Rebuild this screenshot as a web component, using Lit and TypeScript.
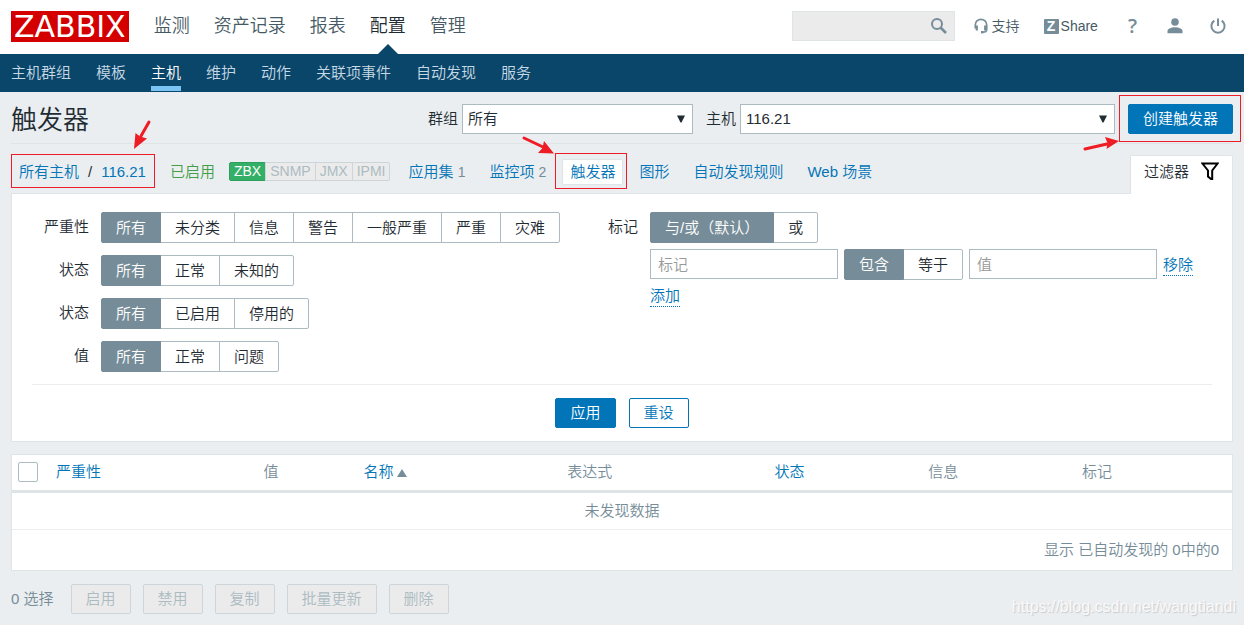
import { LitElement, html, css, svg, nothing } from "lit";
import { customElement, property } from "lit/decorators.js";
import { classMap } from "lit/directives/class-map.js";

@customElement("segmented-radio")
class SegmentedRadio extends LitElement {
  @property({ type: Array }) options: string[] = [];
  @property() name = "";
  @property() label = "";

  static styles = css`
    :host { display: inline-flex; }
    .group { display: flex; }
    .option {
      position: relative;
      box-sizing: border-box;
      height: 31px;
      padding: 0 14px;
      margin-left: -1px;
      border: 1px solid #acbbc2;
      line-height: 29px;
      color: #1f2c33;
      background: #fff;
      white-space: nowrap;
      cursor: pointer;
    }
    .option:first-child { margin-left: 0; border-radius: 2px 0 0 2px; }
    .option:last-child { border-radius: 0 2px 2px 0; }
    .option:has(.radio:checked) { background: #768d99; border-color: #768d99; color: #fff; z-index: 1; }
    .radio { position: absolute; inset: 0; margin: 0; opacity: 0; }
  `;

  render() {
    return html`<div class="group" role="radiogroup" aria-label=${this.label}>
      ${this.options.map((text, i) => html`
        <label class="option"><input class="radio" type="radio" name=${this.name} ?checked=${i === 0} />${text}</label>`)}
    </div>`;
  }
}

const icons = {
  search: html`<svg width="18" height="18" viewBox="0 0 18 18" fill="none" stroke="#768d99"><circle cx="7" cy="7" r="5" stroke-width="2"/><path d="M10.500 10.500 16 16" stroke-width="2.600"/></svg>`,
  support: html`<svg width="14" height="16" viewBox="0 0 14 16" fill="none" stroke="#768d99" stroke-width="1.700"><path d="M1.300 10.500V7a5.700 5.700 0 0 1 11.400 0v4.500c0 1.800-1.600 2.700-4 2.700"/><path d="M2.800 7.500v5M11.200 7.500v5" stroke-width="2.200"/><path d="M7 14.200h2.400" stroke-width="2.400"/></svg>`,
  user: html`<svg width="16" height="16" viewBox="0 0 16 16" fill="#768d99"><circle cx="8" cy="4" r="3.800"/><path d="M.5 15.200V13c0-2.600 4.500-3.700 7.500-3.700s7.500 1.100 7.500 3.700v2.200z"/></svg>`,
  power: html`<svg width="16" height="16" viewBox="0 0 16 16" fill="none" stroke="#768d99" stroke-width="2"><path d="M4.300 2.600a6.600 6.600 0 1 0 7.400 0M8 .5v7.600"/></svg>`,
  funnel: html`<svg width="18" height="19" viewBox="0 0 18 19" fill="none" stroke="#000" stroke-width="2"><path d="M1.400 1.500h15.200L11.200 8.500v8.500H10L7 14.500v-6z"/></svg>`,
};

@customElement("app-root")
class AppRoot extends LitElement {
  static styles = css`
    :host {
      display: block;
      position: relative;
      min-height: 100vh;
      background: #ebeef0;
      color: #1f2c33;
      font: 350 15px/20px "Liberation Sans", "Noto Sans CJK SC", sans-serif;
    }
    a { color: #0275b8; text-decoration: none; }
    button, input, select { font: inherit; box-sizing: border-box; }

    .top { display: flex; align-items: center; box-sizing: border-box; height: 54px; padding: 0 18px 2px 11px; background: #fff; }
    .logo { padding: 0 3px; background: #d40000; color: #fff; font: 30px/31px "DejaVu Sans", sans-serif; }
    .menu { display: flex; gap: 24px; height: 54px; margin-left: 25px; align-self: flex-start; }
    .menu-link { position: relative; color: #455a64; font-size: 18px; line-height: 53px; }
    .menu-link.active { color: #1f2c33; }
    .menu-link.active::after {
      content: "";
      position: absolute;
      left: 50%;
      bottom: 0;
      margin-left: -10px;
      border: 10px solid transparent;
      border-top: 0;
      border-bottom-color: #0a466a;
    }
    .search { display: flex; align-items: center; box-sizing: border-box; width: 163px; height: 30px; padding-right: 6px; margin: 0 19px 0 auto; background: #ebebeb; border: 1px solid #dfe4e7; }
    .search-input { flex: 1; min-width: 0; border: 0; background: none; outline: 0; }
    .search-button { display: flex; padding: 0; border: 0; background: none; }
    .tools { display: flex; align-items: center; gap: 24px; font-size: 14px; }
    .tool { display: flex; align-items: center; gap: 4px; color: #455a64; }
    .share { gap: 2px; }
    .share-mark { width: 15px; border-radius: 1px; background: #768d99; color: #fff; font-weight: bold; line-height: 15px; text-align: center; }
    .help { padding: 0 6px; color: #768d99; font: 600 20px/20px "Open Sans", sans-serif; }
    .exit { padding-left: 3px; }

    .subnav { display: flex; gap: 25px; height: 38px; padding: 0 11px; background: #0a466a; }
    .sub-link { height: 32px; color: #c6d9e4; line-height: 38px; }
    .sub-link.active { color: #fff; border-bottom: 5px solid #7ac3f3; }

    .page { padding: 0 11px; }
    .title-row { display: flex; align-items: center; box-sizing: border-box; height: 52px; padding-top: 2px; border-bottom: 1px solid #dfe4e7; }
    .title { margin: 0 auto 0 0; padding-top: 3px; font-size: 26px; font-weight: inherit; line-height: 32px; }
    .field { display: flex; align-items: center; gap: 4px; margin-right: 13px; }
    .select-wrap { display: flex; align-items: center; position: relative; }
    .select { appearance: none; height: 30px; padding: 0 24px 0 5px; border: 1px solid #acbbc2; border-radius: 0; background: #fff; color: #1f2c33; }
    .select-group { width: 231px; }
    .select-host { width: 375px; }
    .caret { position: absolute; right: 8px; pointer-events: none; }
    .anchor { position: relative; display: flex; align-items: center; }
    .mark { position: absolute; border: 1px solid #ee1c24; pointer-events: none; }
    .mark-create { inset: -9px -8px -8px -9px; }
    .mark-path { inset: -8px -9px -6px -8px; }
    .mark-tab { inset: -6px -4px -4px -7px; }
    .arrow { position: absolute; pointer-events: none; overflow: visible; }
    .arrow-create { right: 114px; top: 35px; }
    .arrow-path { left: 112px; top: -42px; }
    .arrow-tab { right: 69px; top: -23px; }

    .button { height: 30px; padding: 0 14px; border: 1px solid #0275b8; border-radius: 2px; background: #fff; color: #0275b8; }
    .button.primary { background: #0275b8; color: #fff; }
    .button:disabled { background: #ebebeb; border-color: #ccd5d9; color: #acbbc2; }

    .object-row { display: flex; align-items: center; height: 49px; padding-left: 8px; }
    .object-nav { display: flex; align-items: center; height: 34px; margin-top: 6px; flex: 1; }
    .path { gap: 9px; }
    .enabled { margin-left: 24px; color: #429e47; }
    .badges { display: flex; margin: 0 10px 0 14px; font-size: 14px; line-height: 17px; }
    .badge { padding: 0 4px; border: 1px solid #ccd5d9; margin-left: -1px; background: #ebebeb; color: #acbbc2; }
    .badge:first-child { margin-left: 0; border-color: #2f9f5e; border-radius: 2px 0 0 2px; background: #34af67; color: #fff; }
    .badge:last-child { border-radius: 0 2px 2px 0; }
    .tabs { display: flex; gap: 8px; }
    .tab { padding: 2px 7px; border: 1px solid transparent; border-radius: 2px; white-space: nowrap; }
    .tab.active { background: #fff; border-color: #dfe4e7; }
    .count { color: #768d99; font-size: 14px; }
    .filter-tab { display: flex; align-items: center; align-self: flex-end; gap: 12px; box-sizing: border-box; height: 39px; margin-bottom: -1px; padding: 0 13px 7px 13px; border: 1px solid #dfe4e7; border-bottom: 0; background: #fff; color: #1f2c33; z-index: 1; border-radius: 2px 2px 0 0; }

    .card { border: 1px solid #dfe4e7; background: #fff; }
    .filter { padding: 18px 20px 13px; }
    .filter-columns { display: grid; grid-template-columns: 564px 1fr; gap: 12px; padding-bottom: 12px; border-bottom: 1px solid #ebeef0; }
    .rows { display: flex; flex-direction: column; gap: 12px; }
    .row { display: grid; grid-template-columns: 57px 1fr; column-gap: 12px; line-height: 29px; }
    .row-label { text-align: right; }
    .tags { display: grid; grid-template-columns: 30px 1fr; column-gap: 12px; align-content: start; line-height: 29px; }
    .tag-stack { display: flex; flex-direction: column; align-items: flex-start; gap: 6px; }
    .tag-line { display: flex; align-items: flex-start; gap: 6px; }
    .text-input { width: 188px; height: 30px; padding: 0 7px; border: 1px solid #acbbc2; background: #fff; }
    .text-input::placeholder { color: #999; opacity: 1; }
    .dotted { padding: 0; border: 0; border-bottom: 1px dotted #0275b8; background: none; color: #0275b8; line-height: 20px; }
    .remove { margin-top: 6px; }
    .filter-actions { display: flex; justify-content: center; gap: 13px; padding-top: 13px; }

    .list { margin-top: 12px; }
    .table { width: 100%; table-layout: fixed; border-collapse: collapse; color: #768d99; }
    .table th { box-sizing: border-box; height: 36px; padding: 0 6px; border-bottom: 3px solid #dfe4e7; font-weight: inherit; text-align: left; }
    .table td { height: 36px; padding: 0 13px; border-bottom: 1px solid #ebeef0; text-align: center; }
    .table .total { height: 40px; border: 0; text-align: right; }
    .table .c-check { width: 38px; }
    .table .c-severity { width: 17%; }
    .table .c-value { width: 8.2%; }
    .table .c-name { width: 16.7%; }
    .table .c-expression { width: 17%; }
    .table .c-narrow { width: 12.6%; }
    .check { display: block; appearance: none; width: 20px; height: 20px; margin: 0; border: 1px solid #acbbc2; border-radius: 2px; background: #fff; }
    .sort { margin-left: 4px; }

    .actions { display: flex; align-items: center; gap: 12px; padding: 13px 0 11px; color: #768d99; }
    .selected { margin-right: 5px; }
    .watermark { position: absolute; right: 8px; bottom: 8px; color: #fff; font-size: 16px; line-height: 20px; text-shadow: 1px 1px 1px #b8bcc0; opacity: 0.7; }
  `;

  private arrow(cls: string, w: number, h: number, line: string, head: string) {
    return html`<svg class="arrow ${cls}" width=${w} height=${h} viewBox="0 0 ${w} ${h}" aria-hidden="true">
      ${svg`<path d=${line} stroke="#ee1c24" stroke-width="3" stroke-linecap="round"/><path d=${head} fill="#ee1c24"/>`}
    </svg>`;
  }

  private caret() {
    return html`<svg class="caret" width="8" height="8" viewBox="0 0 8 8" aria-hidden="true"><path d="M0 .5h8L4.500 7.500h-1z" fill="#1f2c33"/></svg>`;
  }

  private link(cls: string, text: string, active: boolean) {
    return html`<a href="#" class=${classMap({ [cls]: true, active })}>${text}</a>`;
  }

  private filterRow(label: string, name: string, options: string[]) {
    return html`<div class="row">
      <span class="row-label">${label}</span>
      <segmented-radio .options=${options} name=${name} label=${label}></segmented-radio>
    </div>`;
  }

  render() {
    const tabs: [string, number?][] = [["应用集", 1], ["监控项", 2], ["触发器"], ["图形"], ["自动发现规则"], ["Web 场景"]];
    return html`
      <header class="top">
        <a href="#" class="logo">ZABBIX</a>
        <nav class="menu">
          ${["监测", "资产记录", "报表", "配置", "管理"].map((t) => this.link("menu-link", t, t === "配置"))}
        </nav>
        <form class="search" role="search">
          <input class="search-input" type="text" aria-label="搜索" />
          <button class="search-button" type="button" aria-label="搜索">${icons.search}</button>
        </form>
        <div class="tools">
          <a href="#" class="tool">${icons.support}<span>支持</span></a>
          <a href="#" class="tool share"><span class="share-mark">Z</span><span>Share</span></a>
          <a href="#" class="tool help">?</a>
          <a href="#" class="tool" aria-label="用户">${icons.user}</a>
          <a href="#" class="tool exit" aria-label="退出">${icons.power}</a>
        </div>
      </header>
      <nav class="subnav">
        ${["主机群组", "模板", "主机", "维护", "动作", "关联项事件", "自动发现", "服务"].map((t) => this.link("sub-link", t, t === "主机"))}
      </nav>
      <main class="page">
        <div class="title-row">
          <h1 class="title">触发器</h1>
          <div class="field">
            <label for="group">群组</label>
            <span class="select-wrap"><select id="group" class="select select-group"><option>所有</option></select>${this.caret()}</span>
          </div>
          <div class="field">
            <label for="host">主机</label>
            <span class="select-wrap"><select id="host" class="select select-host"><option>116.21</option></select>${this.caret()}</span>
          </div>
          <div class="anchor">
            <button class="button primary" type="button">创建触发器</button>
            <span class="mark mark-create"></span>
            ${this.arrow("arrow-create", 36, 14, "M2 10 24 5", "M36 2 22 -2 24.500 4 23.500 10z")}
          </div>
        </div>
        <div class="object-row">
          <div class="object-nav">
            <div class="anchor path">
              <a href="#">所有主机</a><span>/</span><a href="#">116.21</a>
              <span class="mark mark-path"></span>
              ${this.arrow("arrow-path", 20, 30, "M18 2 10 16", "M3 29 4.500 13 9 16.500 16 18.500z")}
            </div>
            <span class="enabled">已启用</span>
            <div class="badges">${["ZBX", "SNMP", "JMX", "IPMI"].map((t) => html`<span class="badge">${t}</span>`)}</div>
            <nav class="tabs">
              ${tabs.map(([text, count]) => {
                const active = text === "触发器";
                const tab = html`<a href="#" class=${classMap({ tab: true, active })}>${text}${count ? html` <span class="count">${count}</span>` : nothing}</a>`;
                return active
                  ? html`<span class="anchor">${tab}<span class="mark mark-tab"></span>${this.arrow("arrow-tab", 32, 18, "M2 2 21 11", "M32 17.500 16 17 20.500 12 22 5z")}</span>`
                  : tab;
              })}
            </nav>
          </div>
          <a href="#" class="filter-tab"><span>过滤器</span>${icons.funnel}</a>
        </div>
        <form class="card filter">
          <div class="filter-columns">
            <div class="rows">
              ${this.filterRow("严重性", "severity", ["所有", "未分类", "信息", "警告", "一般严重", "严重", "灾难"])}
              ${this.filterRow("状态", "state", ["所有", "正常", "未知的"])}
              ${this.filterRow("状态", "status", ["所有", "已启用", "停用的"])}
              ${this.filterRow("值", "value", ["所有", "正常", "问题"])}
            </div>
            <div class="tags">
              <span class="row-label">标记</span>
              <div class="tag-stack">
                <segmented-radio .options=${["与/或（默认）", "或"]} name="evaltype" label="标记"></segmented-radio>
                <div class="tag-line">
                  <input class="text-input" type="text" placeholder="标记" aria-label="标记" />
                  <segmented-radio .options=${["包含", "等于"]} name="operator" label="运算"></segmented-radio>
                  <input class="text-input" type="text" placeholder="值" aria-label="值" />
                  <button class="dotted remove" type="button">移除</button>
                </div>
                <button class="dotted" type="button">添加</button>
              </div>
            </div>
          </div>
          <div class="filter-actions">
            <button class="button primary" type="button">应用</button>
            <button class="button" type="button">重设</button>
          </div>
        </form>
        <div class="card list">
          <table class="table">
            <thead>
              <tr>
                <th class="c-check"><input class="check" type="checkbox" aria-label="全选" /></th>
                <th class="c-severity"><a href="#">严重性</a></th>
                <th class="c-value">值</th>
                <th class="c-name"><a href="#">名称<svg class="sort" width="10" height="8" viewBox="0 0 10 8"><path d="M0 8 5 0l5 8z" fill="#768d99"/></svg></a></th>
                <th class="c-expression">表达式</th>
                <th class="c-narrow"><a href="#">状态</a></th>
                <th class="c-narrow">信息</th>
                <th>标记</th>
              </tr>
            </thead>
            <tbody>
              <tr><td colspan="8">未发现数据</td></tr>
              <tr><td class="total" colspan="8">显示 已自动发现的 0中的0</td></tr>
            </tbody>
          </table>
        </div>
        <div class="actions">
          <span class="selected">0 选择</span>
          ${["启用", "禁用", "复制", "批量更新", "删除"].map((t) => html`<button class="button" type="button" disabled>${t}</button>`)}
        </div>
      </main>
      <span class="watermark">https://blog.csdn.net/wangtiandi</span>
    `;
  }
}
